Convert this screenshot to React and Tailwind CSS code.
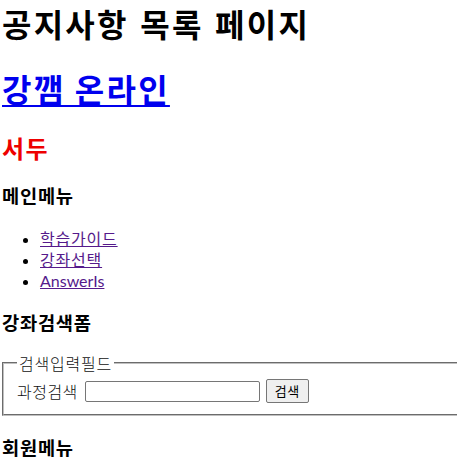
const head = { fontFamily: '"Noto Sans CJK KR", "Noto Sans", sans-serif' };
const body = { fontFamily: 'Lato, "Noto Sans CJK KR", sans-serif' };

export default function App() {
    return (
        <div className="bg-white text-black pl-[2px] w-[470px] overflow-hidden" style={head}>
            <h1 className="text-[32px] font-bold leading-[37px] mt-[5px] tracking-[0.07em] [word-spacing:2px]">
                공지사항 목록 페이지
            </h1>
            <h1 className="text-[32px] font-bold leading-[37px] mt-[28px] tracking-[0.07em]">
                <a href="#" className="text-[#0000ee] underline decoration-2 underline-offset-[3px]">
                    강깸 온라인
                </a>
            </h1>
            <h2 className="text-[24px] font-bold leading-[28px] mt-[27px] text-[#ee0000] tracking-[0.06em]">서두</h2>
            <h3 className="text-[18.72px] font-bold leading-[22px] mt-[22px] tracking-[0.04em]">메인메뉴</h3>
            <ul className="list-disc pl-[38px] mt-[22px] text-[16px] leading-[21px]" style={body}>
                <li><a href="#" className="text-[#551a8b] underline tracking-[0.05em]">학습가이드</a></li>
                <li><a href="#" className="text-[#551a8b] underline tracking-[0.05em]">강좌선택</a></li>
                <li><a href="#" className="text-[#551a8b] underline">AnswerIs</a></li>
            </ul>
            <h3 className="text-[18.72px] font-bold leading-[22px] mt-[20px] tracking-[0.04em]">강좌검색폼</h3>
            <fieldset className="mt-[20px] border-2 [border-style:groove] border-[#c0c0c0] px-[13px] pb-[11px] pt-[6px] w-[470px]">
                <legend className="px-[2px] text-[16px] leading-[20px] text-[#111] font-light tracking-[0.05em]">검색입력필드</legend>
                <form className="flex items-center text-[16px] text-[#111]" onSubmit={(e) => e.preventDefault()}>
                    <label className="font-light mr-[7px] tracking-[0.03em]">과정검색</label>
                    <input type="text" className="w-[175px] h-[21px] border border-[#767676] rounded-[2px] bg-white" />
                    <button type="submit" className="ml-[6px] w-[43px] h-[24px] border border-[#767676] rounded-[2px] bg-[#efefef] text-[13px] text-black tracking-[0.05em]">
                        검색
                    </button>
                </form>
            </fieldset>
            <h3 className="text-[18.72px] font-bold leading-[22px] mt-[20px] tracking-[0.04em]">회원메뉴</h3>
        </div>
    );
}
